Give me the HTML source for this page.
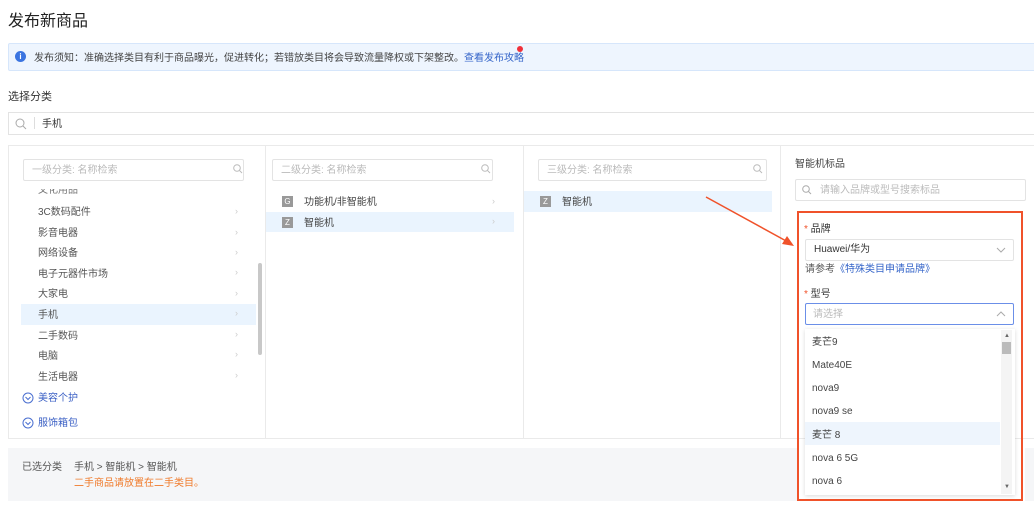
<!DOCTYPE html>
<html><head><meta charset="utf-8"><style>
*{box-sizing:border-box;margin:0;padding:0}
body{width:1034px;height:511px;overflow:hidden;background:#fff;font-family:"Liberation Sans","Noto Sans CJK SC",sans-serif;color:#333;position:relative;font-size:10px;line-height:16px}
.a{position:absolute}
.inp{position:absolute;border:1px solid #e3e3e3;border-radius:2px;background:#fff;color:#bbb;font-size:10px;padding-left:8px;line-height:22px;height:22px}
.it{position:absolute;left:38px;font-size:10px;color:#555}
.ar{position:absolute;color:#ccc;font-size:9px}
.dd{position:absolute;left:812px;font-size:10px;color:#444}
</style></head><body>
<div class="a" style="left:8px;top:12px;font-size:16px;line-height:20px;color:#222">发布新商品</div>
<div class="a" style="left:8px;top:43px;width:1030px;height:28px;background:#eef5fe;border:1px solid #d6e6fb;border-radius:2px"></div>
<div class="a" style="left:15px;top:51px;width:11px;height:11px;border-radius:50%;background:#3b74e0;color:#fff;font-size:8px;text-align:center;line-height:11px;font-weight:bold">i</div>
<div class="a" style="left:34px;top:51px;font-size:10px;color:#444">发布须知：准确选择类目有利于商品曝光，促进转化；若错放类目将会导致流量降权或下架整改。<span style="color:#3565c9">查看发布攻略</span></div>
<div class="a" style="left:517px;top:46px;width:6px;height:6px;border-radius:50%;background:#f0303a"></div>
<div class="a" style="left:8px;top:90px;font-size:11px;line-height:14px;color:#333">选择分类</div>
<div class="a" style="left:8px;top:112px;width:1030px;height:23px;border:1px solid #e3e3e3"></div>
<svg class="a" style="left:15px;top:118px" width="12" height="12"><circle cx="5" cy="5" r="4" fill="none" stroke="#aaa"/><line x1="8" y1="8" x2="11" y2="11" stroke="#aaa"/></svg>
<div class="a" style="left:34px;top:117px;width:1px;height:12px;background:#ddd"></div>
<div class="a" style="left:42px;top:117px;font-size:10px;color:#333">手机</div>
<div class="a" style="left:8px;top:145px;width:1030px;height:294px;border:1px solid #eaeaea"></div>
<div class="a" style="left:265px;top:145px;width:1px;height:294px;background:#eaeaea"></div>
<div class="a" style="left:523px;top:145px;width:1px;height:294px;background:#eaeaea"></div>
<div class="a" style="left:780px;top:145px;width:1px;height:294px;background:#eaeaea"></div>
<div class="inp" style="left:23px;top:159px;width:221px">一级分类: 名称检索</div>
<div class="inp" style="left:272px;top:159px;width:221px">二级分类: 名称检索</div>
<div class="inp" style="left:538px;top:159px;width:229px">三级分类: 名称检索</div>
<svg class="a" style="left:233px;top:164px" width="10" height="10"><circle cx="4" cy="4" r="3.3" fill="none" stroke="#bbb"/><line x1="6.5" y1="6.5" x2="9" y2="9" stroke="#bbb"/></svg>
<svg class="a" style="left:481px;top:164px" width="10" height="10"><circle cx="4" cy="4" r="3.3" fill="none" stroke="#bbb"/><line x1="6.5" y1="6.5" x2="9" y2="9" stroke="#bbb"/></svg>
<svg class="a" style="left:753px;top:164px" width="10" height="10"><circle cx="4" cy="4" r="3.3" fill="none" stroke="#bbb"/><line x1="6.5" y1="6.5" x2="9" y2="9" stroke="#bbb"/></svg>
<div class="a" style="left:20px;top:189px;width:240px;height:7px;overflow:hidden"><div style="position:absolute;left:18px;top:-6px;font-size:10px;color:#777">文化用品</div></div>
<div class="a" style="left:21px;top:304px;width:235px;height:21px;background:#eaf4fe"></div>
<div class="it" style="top:205px">3C数码配件</div>
<div class="it" style="top:226px">影音电器</div>
<div class="it" style="top:246px">网络设备</div>
<div class="it" style="top:267px">电子元器件市场</div>
<div class="it" style="top:287px">大家电</div>
<div class="it" style="top:308px">手机</div>
<div class="it" style="top:329px">二手数码</div>
<div class="it" style="top:349px">电脑</div>
<div class="it" style="top:370px">生活电器</div>
<div class="ar" style="left:235px;top:203px">›</div><div class="ar" style="left:235px;top:224px">›</div><div class="ar" style="left:235px;top:244px">›</div><div class="ar" style="left:235px;top:264px">›</div><div class="ar" style="left:235px;top:285px">›</div><div class="ar" style="left:235px;top:305px">›</div><div class="ar" style="left:235px;top:326px">›</div><div class="ar" style="left:235px;top:346px">›</div><div class="ar" style="left:235px;top:367px">›</div>
<div class="a" style="left:258px;top:263px;width:4px;height:92px;background:#c8c8c8;border-radius:2px"></div>
<svg class="a" style="left:22px;top:392px" width="12" height="12"><circle cx="6" cy="6" r="5" fill="none" stroke="#4a6fd0"/><polyline points="3.5,5 6,7.5 8.5,5" fill="none" stroke="#4a6fd0"/></svg>
<div class="a" style="left:38px;top:391px;color:#3a5fc4">美容个护</div>
<svg class="a" style="left:22px;top:417px" width="12" height="12"><circle cx="6" cy="6" r="5" fill="none" stroke="#4a6fd0"/><polyline points="3.5,5 6,7.5 8.5,5" fill="none" stroke="#4a6fd0"/></svg>
<div class="a" style="left:38px;top:416px;color:#3a5fc4">服饰箱包</div>
<div class="a" style="left:266px;top:212px;width:248px;height:20px;background:#eaf4fe"></div>
<div class="a" style="left:282px;top:196px;width:11px;height:11px;background:#999;color:#fff;font-size:8px;text-align:center;line-height:11px">G</div>
<div class="a" style="left:304px;top:195px;color:#444">功能机/非智能机</div>
<div class="a" style="left:282px;top:217px;width:11px;height:11px;background:#999;color:#fff;font-size:8px;text-align:center;line-height:11px">Z</div>
<div class="a" style="left:304px;top:216px;color:#444">智能机</div>
<div class="ar" style="left:492px;top:193px">›</div><div class="ar" style="left:492px;top:213px">›</div>
<div class="a" style="left:524px;top:191px;width:248px;height:21px;background:#eaf4fe"></div>
<div class="a" style="left:540px;top:196px;width:11px;height:11px;background:#999;color:#fff;font-size:8px;text-align:center;line-height:11px">Z</div>
<div class="a" style="left:562px;top:195px;color:#444">智能机</div>
<div class="a" style="left:795px;top:157px;color:#444">智能机标品</div>
<div class="inp" style="left:795px;top:179px;width:231px;padding-left:24px">请输入品牌或型号搜索标品</div>
<svg class="a" style="left:802px;top:185px" width="10" height="10"><circle cx="4" cy="4" r="3.3" fill="none" stroke="#aaa"/><line x1="6.5" y1="6.5" x2="9" y2="9" stroke="#aaa"/></svg>
<svg class="a" style="left:700px;top:192px" width="100" height="60"><line x1="6" y1="5" x2="88" y2="50" stroke="#f0522a" stroke-width="1.5"/><polygon points="94,54 82,52 87,44" fill="#f0522a"/></svg>
<div class="a" style="left:797px;top:211px;width:226px;height:290px;border:2px solid #f0522a"></div>
<div class="a" style="left:804px;top:222px;color:#333"><span style="color:#f0522a">* </span>品牌</div>
<div class="a" style="left:805px;top:239px;width:209px;height:22px;border:1px solid #e3e3e3;border-radius:2px;padding-left:8px;line-height:20px;color:#333">Huawei/华为</div>
<svg class="a" style="left:996px;top:246px" width="10" height="8"><polyline points="1,2 5,6 9,2" fill="none" stroke="#aaa"/></svg>
<div class="a" style="left:805px;top:262px;color:#555">请参考<span style="color:#3565c9">《特殊类目申请品牌》</span></div>
<div class="a" style="left:804px;top:287px;color:#333"><span style="color:#f0522a">* </span>型号</div>
<div class="a" style="left:805px;top:303px;width:209px;height:22px;border:1px solid #6b8fe8;border-radius:2px;padding-left:7px;line-height:21px;color:#bbb">请选择</div>
<svg class="a" style="left:996px;top:310px" width="10" height="8"><polyline points="1,6 5,2 9,6" fill="none" stroke="#aaa"/></svg>
<div class="a" style="left:805px;top:329px;width:210px;height:166px;background:#fff;box-shadow:0 1px 4px rgba(0,0,0,.15)"></div>
<div class="a" style="left:805px;top:422px;width:195px;height:23px;background:#eef5fd"></div>
<div class="dd" style="top:335px">麦芒9</div>
<div class="dd" style="top:358px">Mate40E</div>
<div class="dd" style="top:381px">nova9</div>
<div class="dd" style="top:404px">nova9 se</div>
<div class="dd" style="top:428px">麦芒 8</div>
<div class="dd" style="top:451px">nova 6 5G</div>
<div class="dd" style="top:474px">nova 6</div>
<div class="a" style="left:1001px;top:330px;width:11px;height:164px;background:#f4f4f4"></div>
<div class="a" style="left:1002px;top:342px;width:9px;height:12px;background:#bbb"></div>
<div class="a" style="left:1004px;top:333px;font-size:6px;line-height:6px;color:#666">▲</div>
<div class="a" style="left:1004px;top:484px;font-size:6px;line-height:6px;color:#666">▼</div>
<div class="a" style="left:8px;top:448px;width:789px;height:53px;background:#f5f6f8"></div>
<div class="a" style="left:1025px;top:448px;width:9px;height:53px;background:#f5f6f8"></div>
<div class="a" style="left:22px;top:460px;color:#555">已选分类</div>
<div class="a" style="left:74px;top:460px;color:#555">手机 &gt; 智能机 &gt; 智能机</div>
<div class="a" style="left:74px;top:476px;color:#f07a2a">二手商品请放置在二手类目。</div>
</body></html>
